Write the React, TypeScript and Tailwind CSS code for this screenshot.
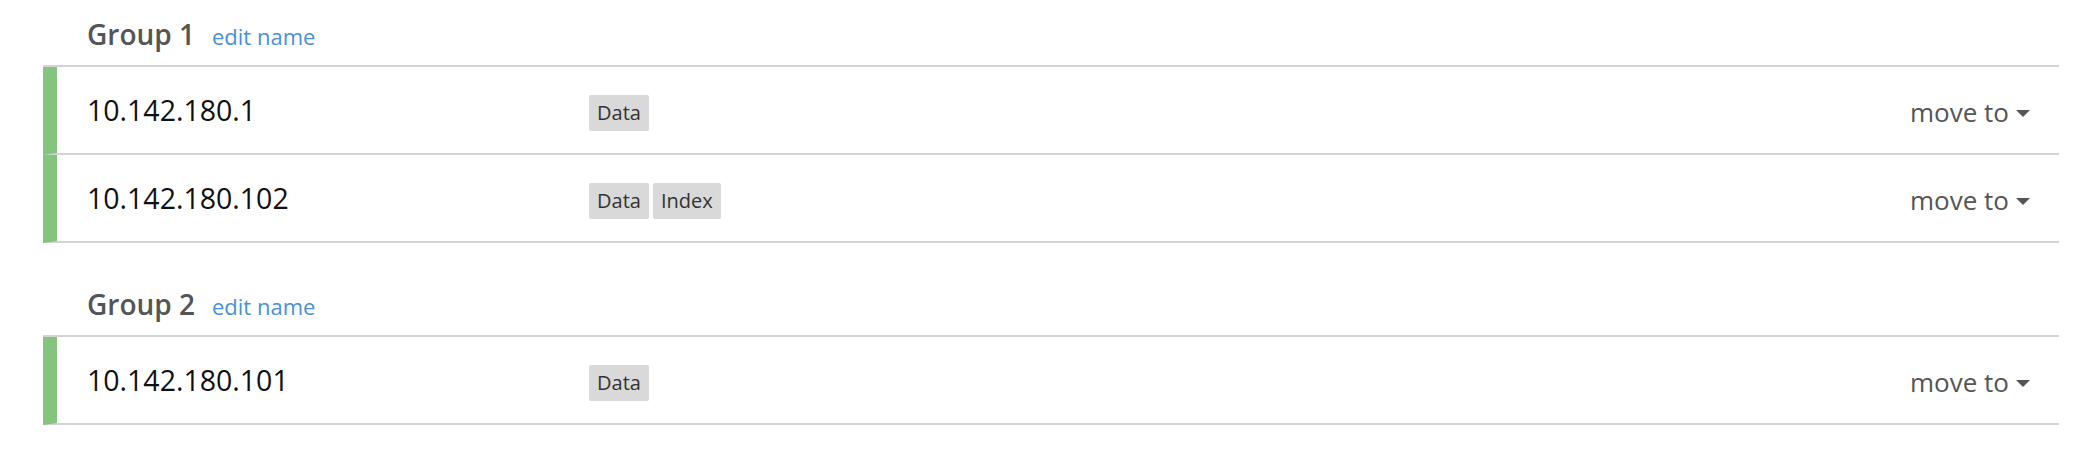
import React from 'react';

type Node = { ip: string; roles: string[] };
type Group = { name: string; nodes: Node[] };

const groups: Group[] = [
  {
    name: 'Group 1',
    nodes: [
      { ip: '10.142.180.1', roles: ['Data'] },
      { ip: '10.142.180.102', roles: ['Data', 'Index'] },
    ],
  },
  {
    name: 'Group 2',
    nodes: [{ ip: '10.142.180.101', roles: ['Data'] }],
  },
];

const NodeRow: React.FC<{ node: Node }> = ({ node }) => (
  <div className="flex items-center h-[88px] border-l-[14px] border-l-[#84c47c] border-b-2 border-b-[#d3d3d3] pl-[30px] pr-[29px]">
    <div className="w-[502px] shrink-0 text-[28.5px] text-[#111] leading-none">{node.ip}</div>
    <div className="flex gap-[4px] mt-[6px]">
      {node.roles.map(r => (
        <span key={r} className="h-[36px] flex items-center px-[8px] bg-[#d9d9d9] rounded-[2px] text-[20px] text-[#333]">
          {r}
        </span>
      ))}
    </div>
    <button className="ml-auto flex items-center gap-[7px] text-[26px] text-[#555] mt-[4px]">
      move to
      <span className="w-0 h-0 border-l-[7px] border-r-[7px] border-t-[7px] border-l-transparent border-r-transparent border-t-[#555] mt-[2px]" />
    </button>
  </div>
);

const App: React.FC = () => {
  return (
    <div className="min-h-screen bg-white font-['Open_Sans',sans-serif] ml-[43px] mr-[20px]">
      {groups.map((g, i) => (
        <div key={g.name} className={i > 0 ? 'mt-[27px]' : ''}>
          <div className="flex items-baseline h-[67px] pt-[14px] pl-[44px] border-b-2 border-[#d3d3d3]">
            <h3 className="text-[28px] font-semibold text-[#555] leading-[40px]">{g.name}</h3>
            <a href="#" className="ml-[17px] text-[22px] text-[#4a8fdb]">edit name</a>
          </div>
          {g.nodes.map(n => (
            <NodeRow key={n.ip} node={n} />
          ))}
        </div>
      ))}
    </div>
  );
};

export default App;
